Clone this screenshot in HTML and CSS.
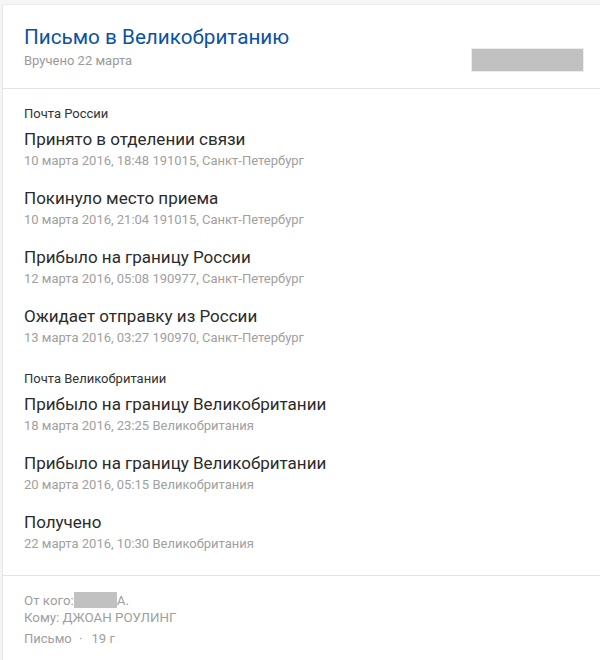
FILE: index.html
```html
<!DOCTYPE html>
<html lang="ru">
<head>
<meta charset="utf-8">
<title>Письмо в Великобританию</title>
<link rel="stylesheet" href="styles.css">
</head>
<body>
<div class="card">
  <header class="head">
    <div class="head-text">
      <h1 class="title">Письмо в Великобританию</h1>
      <div class="subtitle">Вручено 22 марта</div>
    </div>
    <div class="redacted redacted-code"></div>
  </header>

  <section class="history">
    <div class="group">
      <div class="group-name">Почта России</div>
      <div class="event">
        <div class="event-title">Принято в отделении связи</div>
        <div class="event-meta">10 марта 2016, 18:48 191015, Санкт-Петербург</div>
      </div>
      <div class="event">
        <div class="event-title">Покинуло место приема</div>
        <div class="event-meta">10 марта 2016, 21:04 191015, Санкт-Петербург</div>
      </div>
      <div class="event">
        <div class="event-title">Прибыло на границу России</div>
        <div class="event-meta">12 марта 2016, 05:08 190977, Санкт-Петербург</div>
      </div>
      <div class="event">
        <div class="event-title">Ожидает отправку из России</div>
        <div class="event-meta">13 марта 2016, 03:27 190970, Санкт-Петербург</div>
      </div>
    </div>
    <div class="group">
      <div class="group-name">Почта Великобритании</div>
      <div class="event">
        <div class="event-title">Прибыло на границу Великобритании</div>
        <div class="event-meta">18 марта 2016, 23:25 Великобритания</div>
      </div>
      <div class="event">
        <div class="event-title">Прибыло на границу Великобритании</div>
        <div class="event-meta">20 марта 2016, 05:15 Великобритания</div>
      </div>
      <div class="event">
        <div class="event-title">Получено</div>
        <div class="event-meta">22 марта 2016, 10:30 Великобритания</div>
      </div>
    </div>
  </section>

  <footer class="foot">
    <div class="foot-line">От кого:<span class="redacted redacted-name"></span>А.</div>
    <div class="foot-line">Кому: ДЖОАН РОУЛИНГ</div>
    <div class="foot-line foot-kind">Письмо <span class="dot">·</span> 19 г</div>
  </footer>
</div>
</body>
</html>
```

FILE: styles.css
```css
html, body {
  margin: 0;
  padding: 0;
}
body {
  background: #f5f5f5;
  font-family: Roboto, "Liberation Sans", Arial, sans-serif;
  color: #333;
  width: 600px;
  height: 660px;
  overflow: hidden;
}
.card {
  margin: 4px 0 0 2px;
  background: #fff;
  border-top: 1px solid #ececec;
  border-left: 1px solid #e6e6e6;
  min-height: 660px;
}
.head {
  display: flex;
  justify-content: space-between;
  align-items: flex-end;
  padding: 19px 17px 18px 21px;
  border-bottom: 1px solid #e3e3e3;
}
.title {
  margin: 0;
  font-size: 20.7px;
  line-height: 26px;
  font-weight: 400;
  color: #0a52a5;
}
.subtitle {
  margin-top: 2px;
  font-size: 13px;
  line-height: 18px;
  color: #9a9a9a;
}
.redacted {
  background: #c1c1c1;
}
.redacted-code {
  width: 111px;
  height: 22px;
  margin-bottom: -1px;
  box-shadow: 0 0 0 1px #ececec;
}
.history {
  padding: 17px 0 21px 21px;
  border-bottom: 1px solid #e3e3e3;
}
.group + .group {
  margin-top: 23px;
}
.group-name {
  font-size: 13px;
  line-height: 16px;
  color: #333;
  margin-bottom: 7px;
}
.event + .event {
  margin-top: 17px;
}
.event-title {
  font-size: 17px;
  line-height: 20px;
  color: #2b2b2b;
}
.event-meta {
  margin-top: 2px;
  font-size: 13px;
  line-height: 20px;
  color: #a0a0a0;
}
.foot {
  padding: 16px 0 0 21px;
  font-size: 13.3px;
  line-height: 17px;
  color: #9e9e9e;
}
.redacted-name {
  display: inline-block;
  width: 43px;
  height: 16px;
  vertical-align: -3px;
}
.foot-kind {
  margin-top: 4px;
  font-size: 13px;
}
.dot {
  margin: 0 6px 0 4px;
}
```
